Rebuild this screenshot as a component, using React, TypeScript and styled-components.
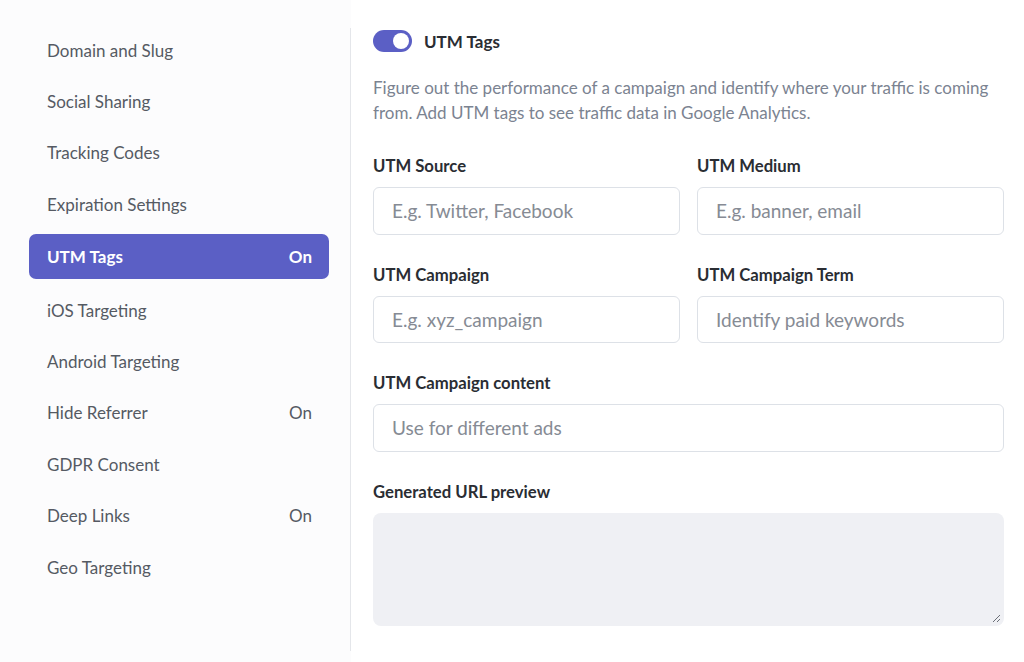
import { FC } from 'react';
import styled, { createGlobalStyle } from 'styled-components';

const GlobalStyle = createGlobalStyle`
  html, body {
    margin: 0;
    padding: 0;
    background: #ffffff;
  }
  * {
    box-sizing: border-box;
  }
  body {
    font-family: 'Lato', 'Open Sans', sans-serif;
    -webkit-font-smoothing: antialiased;
  }
`;

const Page = styled.div`
  display: flex;
  width: 1024px;
  height: 662px;
  overflow: hidden;
`;

const Sidebar = styled.nav`
  width: 351px;
  flex-shrink: 0;
  padding: 27.5px 22px 0 29px;
  background: #fcfcfd;
  display: flex;
  flex-direction: column;
  gap: 6.4px;
  position: relative;

  &::after {
    content: '';
    position: absolute;
    right: 0;
    top: 28px;
    bottom: 11px;
    width: 1px;
    background: #e4e6ea;
  }
`;

const NavItem = styled.div<{ $active?: boolean }>`
  height: 45px;
  flex-shrink: 0;
  display: flex;
  align-items: center;
  justify-content: space-between;
  padding: 0 17px 0 18px;
  margin: ${(p) => (p.$active ? '0.8px 0 2.4px' : '0')};
  border-radius: 7px;
  font-size: 17px;
  font-weight: ${(p) => (p.$active ? 700 : 400)};
  color: ${(p) => (p.$active ? '#ffffff' : '#555a63')};
  background: ${(p) => (p.$active ? '#5b5fc5' : 'transparent')};
`;

const Main = styled.main`
  flex: 1;
  padding: 30px 20px 0 22px;
  display: flex;
  flex-direction: column;
`;

const Header = styled.div`
  display: flex;
  align-items: center;
  gap: 12px;
  height: 22px;
`;

const Toggle = styled.div`
  width: 39px;
  height: 22px;
  border-radius: 11px;
  background: #5b5fc5;
  position: relative;

  &::after {
    content: '';
    position: absolute;
    right: 3px;
    top: 3px;
    width: 16px;
    height: 16px;
    border-radius: 50%;
    background: #ffffff;
  }
`;

const Title = styled.h2`
  margin: 0;
  font-size: 17px;
  font-weight: 700;
  color: #2a2d33;
`;

const Description = styled.p`
  margin: 22.5px 0 0;
  font-size: 17px;
  line-height: 25px;
  color: #7b8391;
`;

const Grid = styled.div`
  margin-top: 31.5px;
  display: grid;
  grid-template-columns: 1fr 1fr;
  column-gap: 17px;
  row-gap: 30px;
`;

const Field = styled.div<{ $wide?: boolean }>`
  display: flex;
  flex-direction: column;
  gap: 11px;
  grid-column: ${(p) => (p.$wide ? '1 / -1' : 'auto')};
`;

const Label = styled.label`
  font-size: 16.7px;
  line-height: 20px;
  font-weight: 700;
  color: #2a2d33;
`;

const Input = styled.input`
  height: 47.5px;
  width: 100%;
  border: 1.5px solid #dde1e7;
  border-radius: 6px;
  padding: 0 18px;
  font-family: 'Lato', sans-serif;
  font-size: 19px;
  color: #2a2d33;
  background: #ffffff;
  outline: none;

  &::placeholder {
    color: #868b94;
  }
`;

const PreviewBox = styled.div`
  position: relative;
`;

const Preview = styled.textarea`
  display: block;
  height: 113px;
  width: 100%;
  border: none;
  border-radius: 8px;
  background: #eff0f4;
  resize: none;
  font-family: 'Lato', sans-serif;
  font-size: 16px;
  padding: 12px 18px;
  outline: none;
`;

const Grip = styled.svg`
  position: absolute;
  right: 3px;
  bottom: 3px;
  width: 9px;
  height: 9px;
  pointer-events: none;
`;

const navItems: { label: string; on?: boolean; active?: boolean }[] = [
  { label: 'Domain and Slug' },
  { label: 'Social Sharing' },
  { label: 'Tracking Codes' },
  { label: 'Expiration Settings' },
  { label: 'UTM Tags', on: true, active: true },
  { label: 'iOS Targeting' },
  { label: 'Android Targeting' },
  { label: 'Hide Referrer', on: true },
  { label: 'GDPR Consent' },
  { label: 'Deep Links', on: true },
  { label: 'Geo Targeting' },
];

const fields = [
  { label: 'UTM Source', placeholder: 'E.g. Twitter, Facebook' },
  { label: 'UTM Medium', placeholder: 'E.g. banner, email' },
  { label: 'UTM Campaign', placeholder: 'E.g. xyz_campaign' },
  { label: 'UTM Campaign Term', placeholder: 'Identify paid keywords' },
  { label: 'UTM Campaign content', placeholder: 'Use for different ads', wide: true },
];

const App: FC = () => (
  <>
    <GlobalStyle />
    <Page>
      <Sidebar>
        {navItems.map((item) => (
          <NavItem key={item.label} $active={item.active}>
            <span>{item.label}</span>
            {item.on && <span>On</span>}
          </NavItem>
        ))}
      </Sidebar>
      <Main>
        <Header>
          <Toggle />
          <Title>UTM Tags</Title>
        </Header>
        <Description>
          Figure out the performance of a campaign and identify where your traffic is coming
          from. Add UTM tags to see traffic data in Google Analytics.
        </Description>
        <Grid>
          {fields.map((f) => (
            <Field key={f.label} $wide={f.wide}>
              <Label>{f.label}</Label>
              <Input placeholder={f.placeholder} />
            </Field>
          ))}
          <Field $wide>
            <Label>Generated URL preview</Label>
            <PreviewBox>
              <Preview readOnly />
              <Grip viewBox="0 0 9 9">
                <path d="M1 8 L8 1 M5 8 L8 5" stroke="#6b6f77" strokeWidth="1" />
              </Grip>
            </PreviewBox>
          </Field>
        </Grid>
      </Main>
    </Page>
  </>
);

export default App;
